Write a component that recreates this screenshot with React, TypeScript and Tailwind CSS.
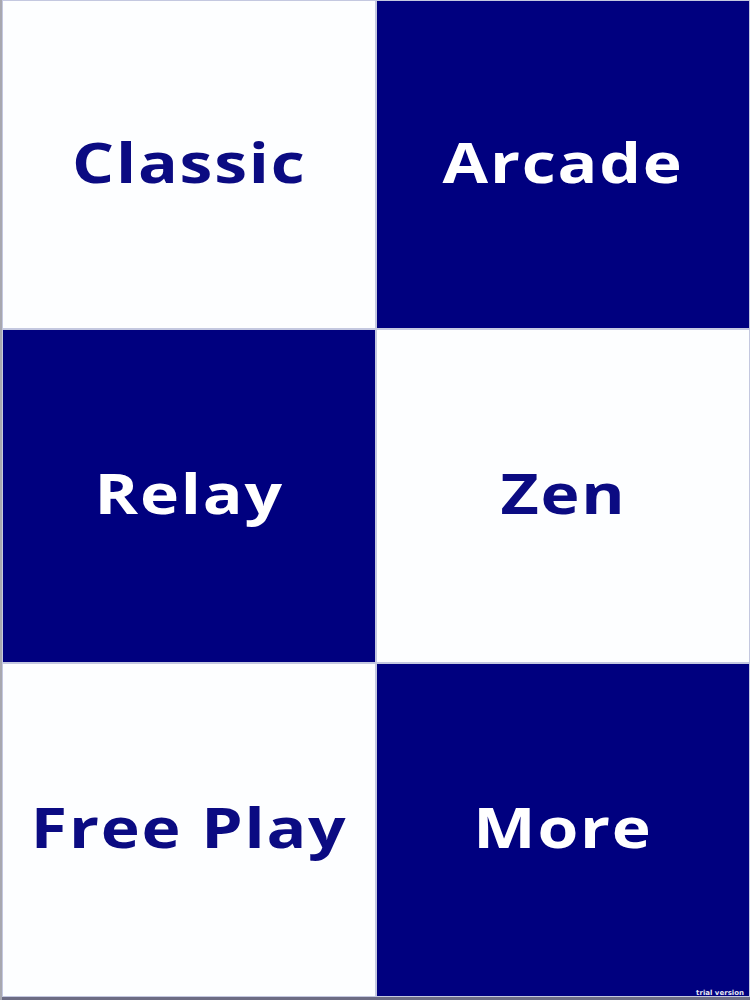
const cells = [
  { label: 'Classic', dark: false },
  { label: 'Arcade', dark: true },
  { label: 'Relay', dark: true },
  { label: 'Zen', dark: false },
  { label: 'Free Play', dark: false },
  { label: 'More', dark: true },
];

export default function App() {
  return (
    <div className="w-[750px] h-[1000px] flex flex-col bg-white border-l-2 border-[#a8a8b0] font-['Open_Sans',sans-serif]">
      <div className="flex-1 grid grid-cols-[374px_374px] grid-rows-[329px_334px_334px]">
        {cells.map((c) => (
          <Tile key={c.label} label={c.label} dark={c.dark} />
        ))}
      </div>
      <div className="relative h-[3px] bg-[#6c6c84]">
        <span className="absolute right-[6px] bottom-[3px] text-[7px] leading-none font-bold text-[#e6e6f4] font-['DejaVu_Sans',sans-serif]">
          trial version
        </span>
      </div>
    </div>
  );
}

function Tile({ label, dark }: { label: string; dark: boolean }) {
  return (
    <div
      className={`flex items-center justify-center pb-[8px] ${
        dark ? 'bg-[#00007f] text-white' : 'bg-[#fdfeff] text-[#0b0b82]'
      } border-[0.5px] border-[#c4c8e0]`}
    >
      <span className="text-[56px] font-bold tracking-[1.5px] scale-x-[1.18] leading-none">
        {label}
      </span>
    </div>
  );
}
